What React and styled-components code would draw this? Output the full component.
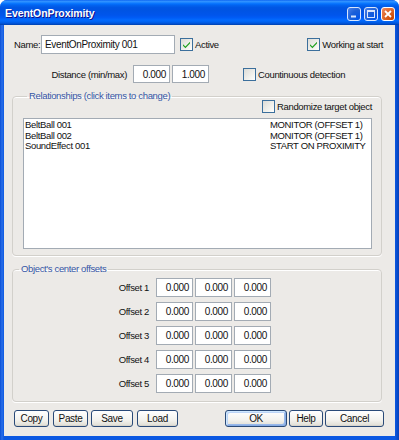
import React from "react";
import styled, { createGlobalStyle } from "styled-components";

const GlobalStyle = createGlobalStyle`
  html, body {
    margin: 0;
    padding: 0;
    background: #ffffff;
  }
  body {
    font-family: "Liberation Sans", Arial, sans-serif;
    font-size: 9.5px;
    letter-spacing: -0.35px;
    color: #111;
  }
`;

const Window = styled.div`
  width: 399px;
  height: 440px;
  display: flex;
  flex-direction: column;
  background: linear-gradient(90deg, #0a4fd6 0px, #2a6ee8 2px, #0b58e2 4px, #0b58e2 395px, #0641b8 399px);
  border-radius: 7px 7px 0 0;
  overflow: hidden;
`;

const TitleBar = styled.div`
  height: 25px;
  flex: none;
  display: flex;
  align-items: center;
  padding: 0 4px 0 5px;
  background: linear-gradient(
    180deg,
    #0058ee 0%,
    #3593ff 4%,
    #288eff 8%,
    #127dff 12%,
    #036ffc 16%,
    #0262ee 22%,
    #0057e5 30%,
    #0054e3 40%,
    #0055eb 60%,
    #005bf5 70%,
    #026afe 80%,
    #0062ef 88%,
    #0052d6 94%,
    #0040ab 100%
  );
`;

const Title = styled.div`
  flex: 1;
  color: #fff;
  font-weight: bold;
  font-size: 10.5px;
  letter-spacing: -0.1px;
  text-shadow: 1px 1px #0f1089;
  padding-top: 1px;
`;

const TitleButtons = styled.div`
  display: flex;
  gap: 3px;
  padding-top: 2px;
`;

const CaptionButton = styled.div`
  width: 14px;
  height: 14px;
  box-sizing: border-box;
  border: 1px solid #fff;
  border-radius: 3px;
  display: flex;
  align-items: center;
  justify-content: center;
  background: ${(p) =>
    p.$close
      ? "radial-gradient(circle at 90% 90%, #cc4600 0%, #dc6527 55%, #f08c6a 100%)"
      : "radial-gradient(circle at 90% 90%, #0054e9 0%, #2263d5 55%, #5a8cf0 100%)"};
  opacity: ${(p) => (p.$close ? 1 : 0.85)};
`;

const Client = styled.div`
  flex: 1;
  margin: 0 4px 4px 4px;
  background: #eceae7;
  display: flex;
  flex-direction: column;
  padding: 10px 0 5px 0;
`;

const Row = styled.div`
  display: flex;
  align-items: center;
  height: ${(p) => p.$h || 19}px;
  margin-top: ${(p) => p.$mt || 0}px;
  padding: 0 ${(p) => p.$pr || 0}px 0 ${(p) => p.$pl || 0}px;
`;

const Label = styled.div`
  width: ${(p) => p.$w}px;
  flex: none;
  text-align: ${(p) => (p.$right ? "right" : "left")};
  white-space: nowrap;
`;

const Field = styled.div`
  width: ${(p) => p.$w}px;
  height: ${(p) => p.$h || 19}px;
  flex: none;
  box-sizing: border-box;
  border: 1px solid #a3abb4;
  background: #fff;
  display: flex;
  align-items: center;
  justify-content: ${(p) => (p.$num ? "flex-end" : "flex-start")};
  padding: 0 3px 0 3px;
  margin-left: ${(p) => p.$ml || 0}px;
  white-space: nowrap;
  font-size: 10px;
`;

const CheckWrap = styled.div`
  display: flex;
  align-items: center;
  gap: 2px;
  margin-left: ${(p) => (p.$auto ? "auto" : `${p.$ml || 0}px`)};
  white-space: nowrap;
`;

const Box = styled.div`
  width: 13px;
  height: 13px;
  box-sizing: border-box;
  border: 1px solid #3b6f9c;
  background: linear-gradient(135deg, #dcdcd7 0%, #f4f4f0 70%, #ffffff 100%);
  display: flex;
  align-items: center;
  justify-content: center;
  flex: none;
`;

const Group = styled.fieldset`
  margin: ${(p) => p.$mt}px 0 0 8px;
  width: 370px;
  box-sizing: border-box;
  border: 1px solid #d2d0cb;
  box-shadow: 0 1px 0 #fff, inset 0 1px 0 #fff;
  border-radius: 4px;
  padding: ${(p) => p.$pad};
  min-width: 0;
`;

const Legend = styled.legend`
  color: #3556a6;
  padding: 0 2px;
  margin-left: ${(p) => p.$ml}px;
  line-height: 12px;
  height: 12px;
`;

const ListBox = styled.div`
  margin-top: 5px;
  height: 131px;
  box-sizing: border-box;
  border: 1px solid #a3abb4;
  background: #fff;
  padding: 1px 0 0 1px;
`;

const ListItem = styled.div`
  display: grid;
  grid-template-columns: 245px 1fr;
  line-height: 10.5px;
  font-size: 9.5px;
  white-space: nowrap;
`;

const OffsetRow = styled.div`
  display: flex;
  align-items: center;
  height: 19px;
  & + & {
    margin-top: 5px;
  }
`;

const Bar = styled.div`
  display: flex;
  align-items: center;
  margin-top: 8px;
  padding: 0 11px 0 10px;
  height: 17px;
`;

const Button = styled.div`
  width: ${(p) => p.$w}px;
  height: 17px;
  box-sizing: border-box;
  margin-left: ${(p) => (p.$auto ? "auto" : `${p.$ml || 0}px`)};
  border: 1px solid #2a4a78;
  border-radius: 3px;
  background: linear-gradient(180deg, #ffffff 0%, #f3f2ee 60%, #e4e2da 90%, #d2cec5 100%);
  display: flex;
  align-items: center;
  justify-content: center;
  font-size: 10px;
  box-shadow: ${(p) =>
    p.$default
      ? "inset 1px 1px 0 #cee7ff, inset -1px -1px 0 #89ade4, inset 2px 2px 0 #bcd4f6, inset -2px -2px 0 #98b8ea"
      : "none"};
`;

const Check = ({ checked }) => (
  <Box>
    {checked && (
      <svg width="9" height="9" viewBox="0 0 9 9">
        <path d="M1 4.2 L3.4 6.6 L8 1.8 L8 3.6 L3.4 8.2 L1 5.8 Z" fill="#21a121" />
      </svg>
    )}
  </Box>
);

const CheckItem = ({ label, checked, ...rest }) => (
  <CheckWrap {...rest}>
    <Check checked={checked} />
    <span>{label}</span>
  </CheckWrap>
);

const relationships = [
  ["BeltBall 001", "MONITOR (OFFSET 1)"],
  ["BeltBall 002", "MONITOR (OFFSET 1)"],
  ["SoundEffect 001", "START ON PROXIMITY"],
];

const offsets = [1, 2, 3, 4, 5];

export default function App() {
  return (
    <>
      <GlobalStyle />
      <Window>
        <TitleBar>
          <Title>EventOnProximity</Title>
          <TitleButtons>
            <CaptionButton>
              <svg width="10" height="10" viewBox="0 0 10 10">
                <rect x="2" y="6.5" width="5" height="2" fill="#fff" />
              </svg>
            </CaptionButton>
            <CaptionButton>
              <svg width="10" height="10" viewBox="0 0 10 10">
                <rect x="1.5" y="1.5" width="7" height="7" fill="none" stroke="#fff" strokeWidth="1" />
                <rect x="1.5" y="1.5" width="7" height="1.5" fill="#fff" />
              </svg>
            </CaptionButton>
            <CaptionButton $close>
              <svg width="10" height="10" viewBox="0 0 10 10">
                <path d="M2 2 L8 8 M8 2 L2 8" stroke="#fff" strokeWidth="1.8" />
              </svg>
            </CaptionButton>
          </TitleButtons>
        </TitleBar>
        <Client>
          <Row $pl={10} $pr={12}>
            <Label $w={27}>Name:</Label>
            <Field $w={134}>EventOnProximity 001</Field>
            <CheckItem $ml={5} checked label="Active" />
            <CheckItem $auto checked label="Working at start" />
          </Row>
          <Row $mt={11} $h={18}>
            <Label $w={123} $right>Distance (min/max)</Label>
            <Field $w={37} $h={18} $ml={6} $num>0.000</Field>
            <Field $w={37} $h={18} $ml={2} $num>1.000</Field>
            <CheckItem $ml={34} label="Countinuous detection" />
          </Row>

          <Group $mt={7} $pad="0 9px 6px 10px">
            <Legend $ml={4}>Relationships (click items to change)</Legend>
            <Row $h={13} $mt={-2} style={{ justifyContent: "flex-end" }}>
              <CheckItem label="Randomize target object" />
            </Row>
            <ListBox>
              {relationships.map(([name, mode]) => (
                <ListItem key={name}>
                  <span>{name}</span>
                  <span>{mode}</span>
                </ListItem>
              ))}
            </ListBox>
          </Group>

          <Group $mt={7} $pad="3px 0 8px 0">
            <Legend $ml={6}>Object's center offsets</Legend>
            {offsets.map((n) => (
              <OffsetRow key={n}>
                <Label $w={136} $right>Offset {n}</Label>
                <Field $w={37} $ml={7} $num>0.000</Field>
                <Field $w={37} $ml={2} $num>0.000</Field>
                <Field $w={37} $ml={2} $num>0.000</Field>
              </OffsetRow>
            ))}
          </Group>

          <Bar>
            <Button $w={35}>Copy</Button>
            <Button $w={35} $ml={4}>Paste</Button>
            <Button $w={42} $ml={3}>Save</Button>
            <Button $w={41} $ml={4}>Load</Button>
            <Button $w={62} $auto $default>OK</Button>
            <Button $w={34} $ml={2}>Help</Button>
            <Button $w={59} $ml={2}>Cancel</Button>
          </Bar>
        </Client>
      </Window>
    </>
  );
}
